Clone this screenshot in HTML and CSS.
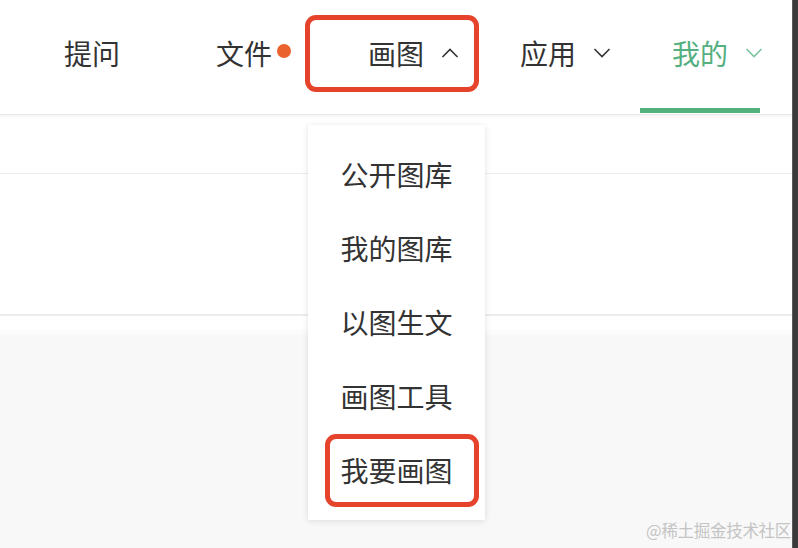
FILE: index.html
```html
<!DOCTYPE html>
<html lang="zh-CN">
<head>
<meta charset="utf-8">
<title>画图菜单</title>
<link rel="stylesheet" href="styles.css">
</head>
<body>
<div class="screen">
  <div class="page">
    <nav class="nav">
      <div class="tab"><span class="label">提问</span></div>
      <div class="tab"><span class="label">文件<i class="dot"></i></span></div>
      <div class="tab"><span class="label">画图<svg class="chev" viewBox="0 0 18 10" width="18" height="10"><path d="M1.5 9 L9 1.5 L16.5 9" fill="none" stroke="#333" stroke-width="1.6"/></svg></span></div>
      <div class="tab"><span class="label">应用<svg class="chev" viewBox="0 0 18 10" width="18" height="10"><path d="M1.5 1 L9 8.5 L16.5 1" fill="none" stroke="#333" stroke-width="1.6"/></svg></span></div>
      <div class="tab active"><span class="label">我的<svg class="chev" viewBox="0 0 18 10" width="18" height="10"><path d="M1.5 1 L9 8.5 L16.5 1" fill="none" stroke="#7cc4a0" stroke-width="1.6"/></svg></span></div>
    </nav>
    <div class="row row-a"></div>
    <div class="row row-b"></div>
    <div class="gap"></div>
    <div class="fill"></div>

    <div class="mark mark-tab"></div>

    <div class="menu">
      <div class="item">公开图库</div>
      <div class="item">我的图库</div>
      <div class="item">以图生文</div>
      <div class="item">画图工具</div>
      <div class="item">我要画图</div>
    </div>
    <div class="mark mark-item"></div>

    <div class="watermark">@稀土掘金技术社区</div>
  </div>
  <div class="scrollbar"></div>
</div>
</body>
</html>
```
FILE: styles.css
```css
* { box-sizing: border-box; }
html, body {
  margin: 0;
  padding: 0;
  overflow: hidden;
  background: #fff;
  font-family: "Noto Sans CJK SC", "Noto Sans", sans-serif;
  color: #333;
}
.screen {
  display: grid;
  grid-template-columns: minmax(0, 1fr) 6px;
  width: 100vw;
  height: 100vh;
}
.page {
  position: relative;
  display: flex;
  flex-direction: column;
  background: #fff;
  overflow: hidden;
}
.scrollbar {
  position: fixed;
  top: 0;
  right: 0;
  width: 6px;
  height: 100vh;
  background: #3a3a3a;
  border-left: 1px solid #5a5a5a;
}
.nav {
  display: flex;
  height: 115px;
  padding-left: 16px;
  border-bottom: 1px solid #e9e9e9;
}
.tab {
  position: relative;
  width: 152px;
  display: flex;
  justify-content: center;
  padding-top: 38px;
}
.label {
  position: relative;
  font-size: 28px;
  line-height: 30px;
  height: 30px;
  color: #333;
}
.tab.active .label { color: #55b07f; }
.tab.active::after {
  content: "";
  position: absolute;
  left: 16px;
  right: 16px;
  bottom: 1px;
  height: 5px;
  background: #52b07c;
}
.dot {
  position: absolute;
  left: 100%;
  top: 6px;
  margin-left: 5px;
  width: 14px;
  height: 14px;
  border-radius: 50%;
  background: #ea622e;
}
.chev {
  position: absolute;
  left: 100%;
  top: 10px;
  margin-left: 17px;
}
.row-a {
  height: 59px;
  border-bottom: 1px solid #ececec;
  box-shadow: inset 0 4px 4px -3px #f0f0f0;
}
.row-b {
  height: 142px;
  border-bottom: 2px solid #ececec;
}
.gap {
  height: 19px;
  background: linear-gradient(#ffffff 60%, #fafafa);
}
.fill {
  flex: 1;
  background: #f8f8f8;
}
.menu {
  position: absolute;
  left: 308px;
  top: 125px;
  width: 177px;
  height: 395px;
  padding-top: 12px;
  background: #fff;
  box-shadow: 0 1px 6px rgba(0, 0, 0, 0.12);
  display: flex;
  flex-direction: column;
}
.item {
  height: 74px;
  display: flex;
  align-items: center;
  justify-content: center;
  font-size: 28px;
  color: #333;
}
.mark {
  position: absolute;
  border: 5px solid #e5432b;
  border-radius: 11px;
}
.mark-tab {
  left: 305px;
  top: 15px;
  width: 174px;
  height: 77px;
}
.mark-item {
  left: 325px;
  top: 434px;
  width: 154px;
  height: 73px;
}
.watermark {
  position: absolute;
  right: 1px;
  bottom: 6px;
  font-size: 16.5px;
  color: #c4c4c4;
  font-family: "Noto Sans CJK SC", serif;
  letter-spacing: -0.3px;
}
```
